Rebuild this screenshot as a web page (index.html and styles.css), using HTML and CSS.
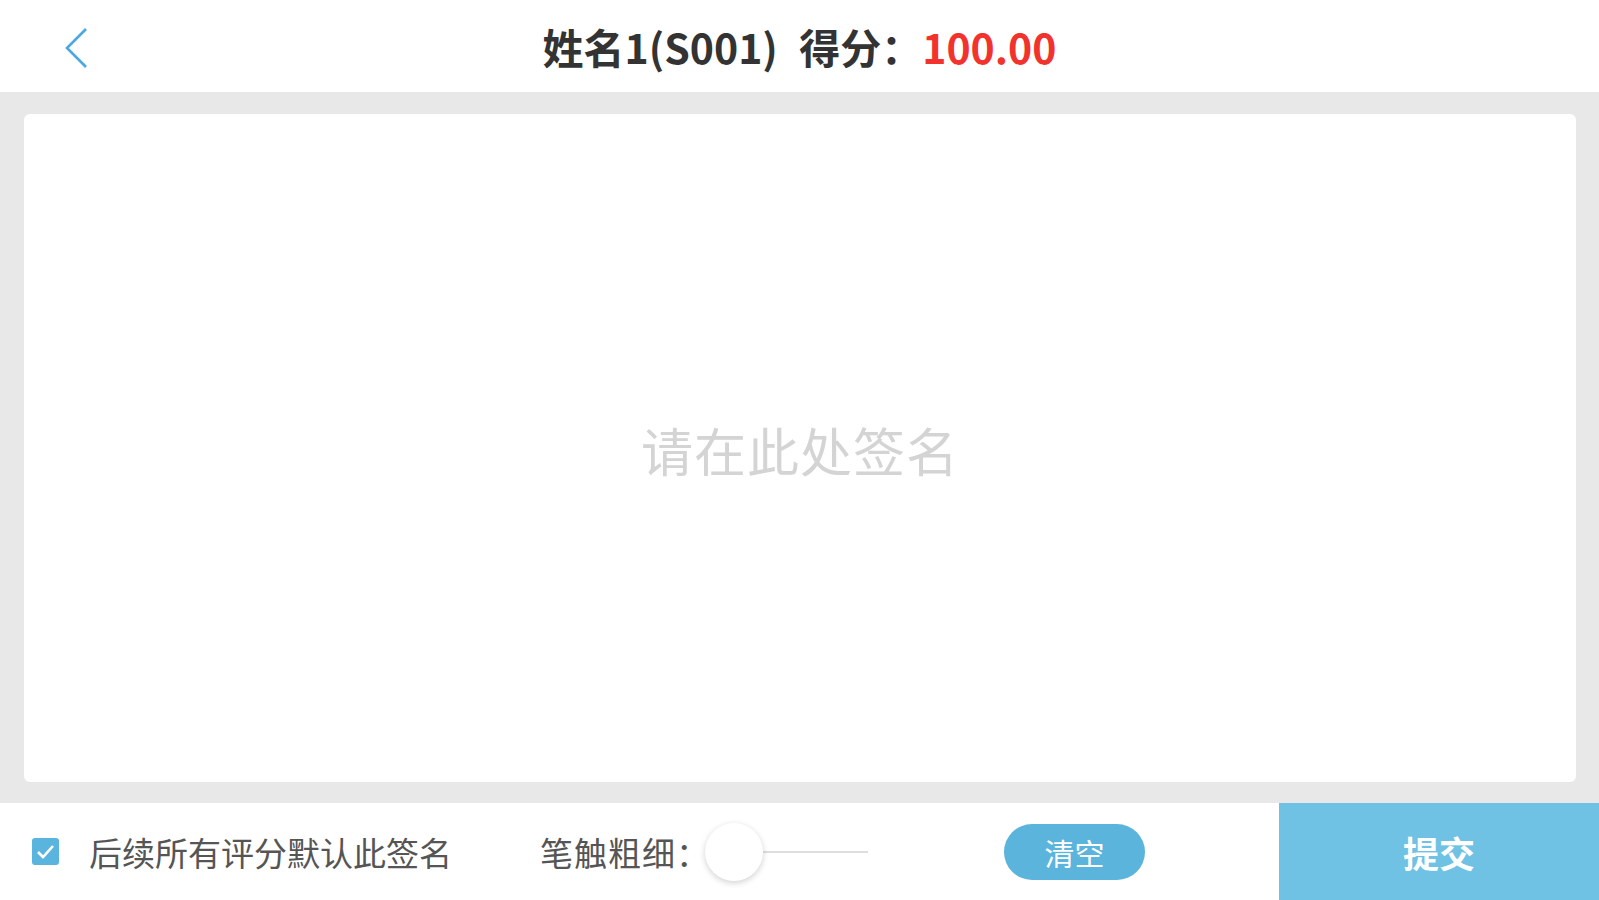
FILE: index.html
```html
<!DOCTYPE html>
<html lang="zh-CN">
<head>
    <meta charset="UTF-8">
    <meta name="viewport" content="width=device-width, initial-scale=1.0">
    <title>签名</title>
    <link rel="stylesheet" href="styles.css">
</head>
<body>
    <header class="top-bar">
        <a class="back-btn" href="#">
            <svg width="26" height="42" viewBox="0 0 26 42">
                <polyline points="23,2 4,21 23,40" fill="none" stroke="#4aa9e0" stroke-width="2.6"/>
            </svg>
        </a>
        <h1 class="title">姓名1(S001) 得分：<span class="score">100.00</span></h1>
    </header>
    <main class="sign-area">
        <div class="sign-canvas">
            <span class="placeholder">请在此处签名</span>
        </div>
    </main>
    <footer class="tool-bar">
        <label class="agree">
            <span class="check-box">
                <svg width="19" height="15" viewBox="0 0 19 15">
                    <polyline points="2,8 7,13 17,2" fill="none" stroke="#fff" stroke-width="2.6"/>
                </svg>
            </span>
            <span class="agree-text">后续所有评分默认此签名</span>
        </label>
        <div class="stroke">
            <span class="stroke-label">笔触粗细：</span>
            <div class="slider">
                <div class="slider-track"></div>
                <div class="slider-knob"></div>
            </div>
        </div>
        <button class="clear-btn">清空</button>
        <button class="submit-btn">提交</button>
    </footer>
</body>
</html>
```

FILE: styles.css
```css
body {
    margin: 0;
    padding: 0;
    height: 100vh;
    display: flex;
    flex-direction: column;
    font-family: "Noto Sans CJK SC", "Noto Sans", sans-serif;
    background: #fff;
    color: #333;
}
.top-bar {
    height: 92px;
    flex-shrink: 0;
    display: flex;
    align-items: center;
    justify-content: center;
    position: relative;
    background: #fff;
}
.back-btn {
    position: absolute;
    left: 63px;
    top: 27px;
    display: block;
}
.title {
    margin: 0;
    font-size: 41px;
    font-weight: bold;
    color: #333;
    word-spacing: 12px;
}
.score {
    color: #f2332d;
}
.sign-area {
    flex: 1;
    background: #e8e8e8;
    padding: 22px 23px 21px 24px;
    display: flex;
}
.sign-canvas {
    flex: 1;
    background: #fff;
    border-radius: 6px;
    display: flex;
    align-items: center;
    justify-content: center;
}
.placeholder {
    font-size: 52px;
    color: #d4d4d4;
    margin-top: 2px;
    letter-spacing: 1px;
}
.tool-bar {
    height: 97px;
    flex-shrink: 0;
    display: flex;
    align-items: center;
    background: #fff;
}
.agree {
    display: flex;
    align-items: center;
    margin-left: 32px;
}
.check-box {
    width: 27px;
    height: 27px;
    border-radius: 3px;
    background: #5ab5de;
    display: flex;
    align-items: center;
    justify-content: center;
}
.agree-text {
    margin-left: 30px;
    font-size: 33px;
    color: #555;
}
.stroke {
    display: flex;
    align-items: center;
    margin-left: 88px;
}
.stroke-label {
    font-size: 33px;
    letter-spacing: 1px;
    color: #555;
}
.slider {
    position: relative;
    width: 163px;
    height: 60px;
    margin-left: -5px;
}
.slider-track {
    position: absolute;
    left: 0;
    right: 0;
    top: 29px;
    height: 2px;
    background: #dedede;
}
.slider-knob {
    position: absolute;
    left: 0;
    top: 1px;
    width: 58px;
    height: 58px;
    border-radius: 50%;
    background: #fff;
    box-shadow: 0 2px 6px rgba(0, 0, 0, 0.18);
}
.clear-btn {
    margin-left: 136px;
    width: 141px;
    height: 56px;
    border: none;
    border-radius: 28px;
    background: #5ab4dc;
    color: #fff;
    font-family: inherit;
    font-size: 30px;
    padding: 0;
}
.submit-btn {
    margin-left: auto;
    width: 320px;
    height: 100%;
    border: none;
    background: #6fc2e3;
    color: #fff;
    font-family: inherit;
    font-size: 36px;
    font-weight: bold;
    padding: 0;
}
```
